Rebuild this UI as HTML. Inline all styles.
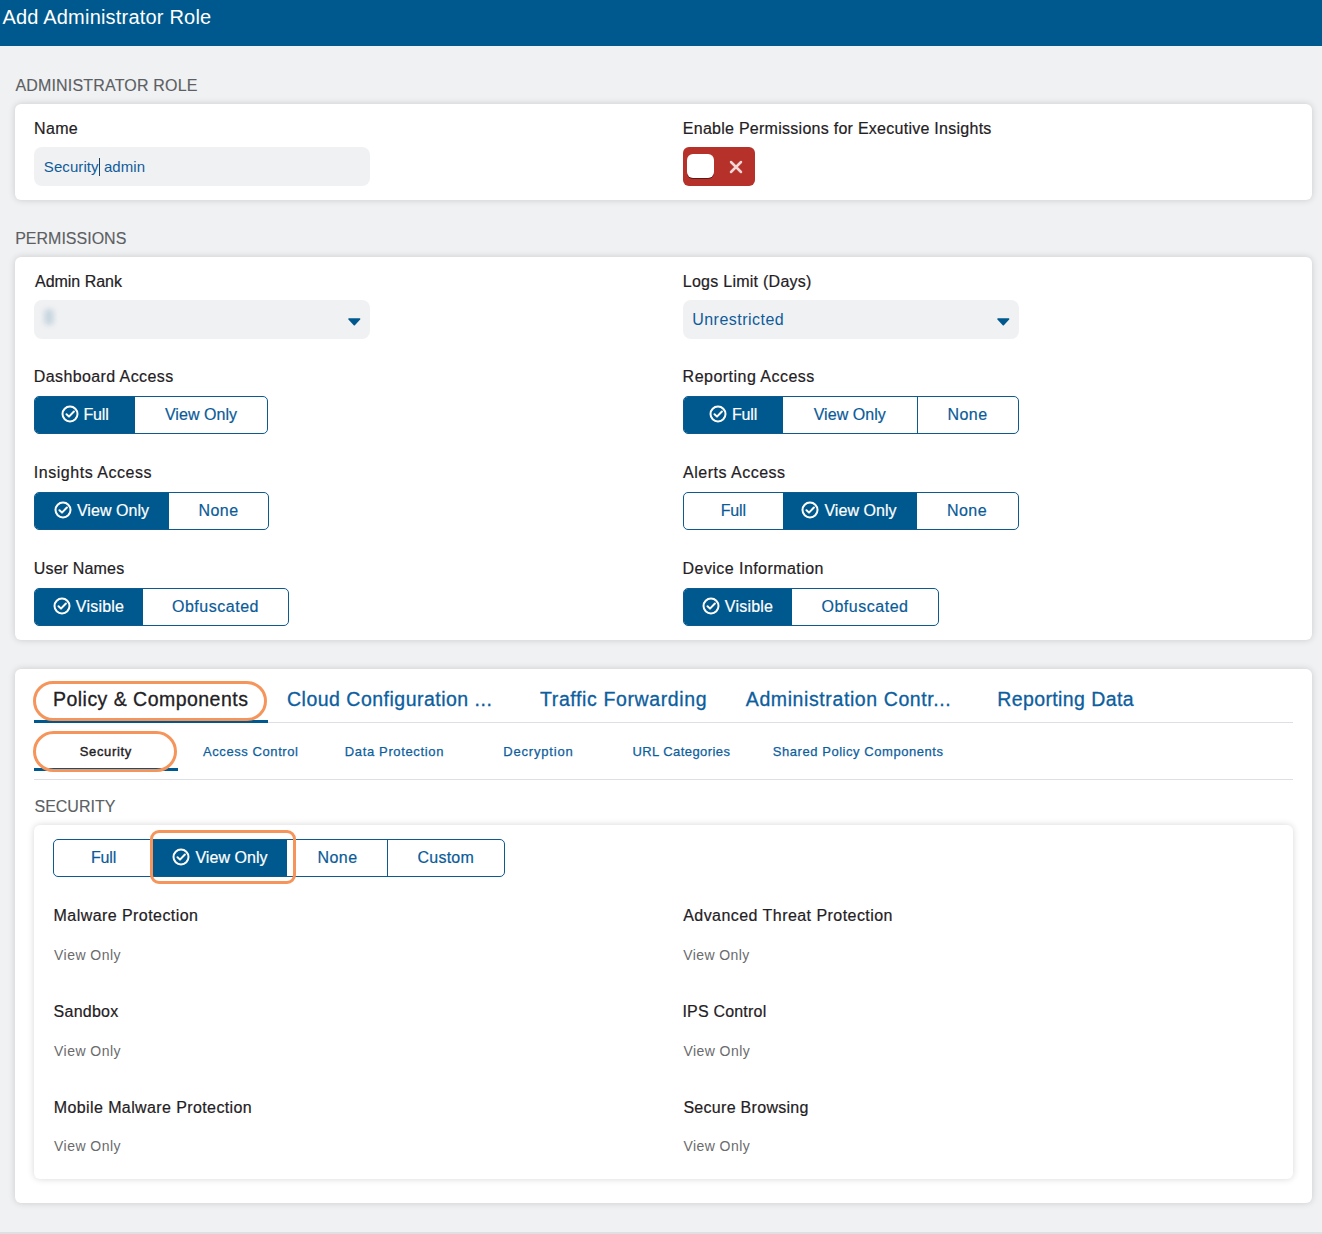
<!DOCTYPE html>
<html><head><meta charset="utf-8"><style>
html,body{margin:0;padding:0;}
body{width:1322px;height:1234px;position:relative;overflow:hidden;background:#f0f1f3;font-family:"Liberation Sans",sans-serif;}
.a{position:absolute;}
.t{position:absolute;white-space:nowrap;line-height:1;}
.card{position:absolute;background:#fff;border-radius:6px;box-shadow:0 0 7px rgba(0,0,0,0.16);}
.inp{position:absolute;background:#f0f1f3;border-radius:8px;}
.grp{position:absolute;height:38px;border:1px solid #0d5a8e;border-radius:5px;box-sizing:border-box;overflow:hidden;display:flex;}
.seg{height:100%;box-sizing:border-box;display:flex;align-items:center;justify-content:center;font-size:16px;color:#0a5b98;flex:none;-webkit-text-stroke:0.2px currentColor;}
.seg.on{background:#00598e;color:#fff;}
.ck{margin-right:5px;margin-left:-1px;position:relative;top:-1px;flex:none;}
.tri{position:absolute;width:0;height:0;border-left:6px solid transparent;border-right:6px solid transparent;border-top:7px solid #00598e;}
</style></head>
<body>
<div class="a" style="left:0;top:0;width:1322px;height:46px;background:#00598e"></div>
<div class="t" id="h_title" style="left:2.4px;top:6.5px;font-size:20px;color:#fff;letter-spacing:0.204px;">Add Administrator Role</div>
<div class="t" id="s_admin" style="left:15.4px;top:78.0px;font-size:16px;color:#5c5f63;letter-spacing:0.179px;-webkit-text-stroke:0.15px #5c5f63;">ADMINISTRATOR ROLE</div>
<div class="card" style="left:15px;top:104px;width:1297px;height:96px"></div>
<div class="t" id="l_name" style="left:34.0px;top:121.0px;font-size:16px;color:#1f2124;letter-spacing:0.36px;-webkit-text-stroke:0.2px #1f2124;">Name</div>
<div class="inp" style="left:34px;top:147px;width:336px;height:39px"></div>
<div class="t" id="inp_text" style="left:43.8px;top:158.0px;font-size:15px;color:#0f5c99;letter-spacing:0.084px;">Security<span style="display:inline-block;width:1px;height:18px;background:#1a3f5f;vertical-align:-4px"></span> admin</div>
<div class="t" id="l_enable" style="left:682.8px;top:121px;font-size:16px;color:#1f2124;letter-spacing:0.266px;-webkit-text-stroke:0.2px #1f2124;">Enable Permissions for Executive Insights</div>
<div class="a" style="left:683px;top:147px;width:72px;height:39px;background:#b5312a;border-radius:6px"></div>
<div class="a" style="left:687px;top:154px;width:27px;height:24px;background:#fff;border-radius:6px;box-shadow:0 1px 0 #5a1a16"></div>
<svg class="a" style="left:728px;top:158.5px" width="16" height="16" viewBox="0 0 16 16"><path d="M3 3L13 13M13 3L3 13" stroke="#f3d6d4" stroke-width="2.5" stroke-linecap="round"/></svg>
<div class="t" id="s_perm" style="left:15.2px;top:231.0px;font-size:16px;color:#5c5f63;letter-spacing:-0.0px;-webkit-text-stroke:0.15px #5c5f63;">PERMISSIONS</div>
<div class="card" style="left:15px;top:257px;width:1297px;height:383px"></div>
<div class="t" id="l_rank" style="left:35.0px;top:274.0px;font-size:16px;color:#1f2124;letter-spacing:-0.02px;-webkit-text-stroke:0.2px #1f2124;">Admin Rank</div>
<div class="inp" style="left:34px;top:300px;width:336px;height:39px"></div>
<div class="a" style="left:44px;top:309px;width:10px;height:16px;background:#c9d7e0;filter:blur(2.5px);border-radius:4px"></div>
<svg class="a" style="left:347.4px;top:317.3px" width="15" height="10" viewBox="0 0 15 10"><path d="M2 2L12.6 2L7.3 7.6Z" fill="#00598e" stroke="#00598e" stroke-width="1.6" stroke-linejoin="round"/></svg>
<div class="t" id="l_logs" style="left:682.8px;top:274.0px;font-size:16px;color:#1f2124;letter-spacing:0.26px;-webkit-text-stroke:0.2px #1f2124;">Logs Limit (Days)</div>
<div class="inp" style="left:683px;top:300px;width:336px;height:39px"></div>
<div class="t" id="v_unres" style="left:692.2px;top:312.0px;font-size:16px;color:#0f5c99;letter-spacing:0.475px;">Unrestricted</div>
<svg class="a" style="left:996px;top:317.3px" width="15" height="10" viewBox="0 0 15 10"><path d="M2 2L12.6 2L7.3 7.6Z" fill="#00598e" stroke="#00598e" stroke-width="1.6" stroke-linejoin="round"/></svg>
<div class="t" id="l_dash" style="left:33.8px;top:369.0px;font-size:16px;color:#1f2124;letter-spacing:0.396px;-webkit-text-stroke:0.2px #1f2124;">Dashboard Access</div>
<div class="t" id="l_rep" style="left:682.6px;top:369.0px;font-size:16px;color:#1f2124;letter-spacing:0.48px;-webkit-text-stroke:0.2px #1f2124;">Reporting Access</div>
<div class="t" id="l_ins" style="left:33.8px;top:465.0px;font-size:16px;color:#1f2124;letter-spacing:0.528px;-webkit-text-stroke:0.2px #1f2124;">Insights Access</div>
<div class="t" id="l_alert" style="left:683.0px;top:465.0px;font-size:16px;color:#1f2124;letter-spacing:0.507px;-webkit-text-stroke:0.2px #1f2124;">Alerts Access</div>
<div class="t" id="l_user" style="left:33.8px;top:561.0px;font-size:16px;color:#1f2124;letter-spacing:0.16px;-webkit-text-stroke:0.2px #1f2124;">User Names</div>
<div class="t" id="l_dev" style="left:682.6px;top:561.0px;font-size:16px;color:#1f2124;letter-spacing:0.436px;-webkit-text-stroke:0.2px #1f2124;">Device Information</div>
<div class="grp" id="g_dash" style="left:34px;top:396px;"><div class="seg on" style="width:100px;"><svg class="ck" width="18" height="18" viewBox="0 0 18 18"><circle cx="9" cy="9" r="7.5" fill="none" stroke="#fff" stroke-width="2.0"/><path d="M5.5 9.2L8 11.6L12.9 6.5" fill="none" stroke="#fff" stroke-width="2.0" stroke-linecap="round" stroke-linejoin="round"/></svg><span id="g_dash_0" style="letter-spacing:-0.198px;position:relative;top:0px">Full</span></div><div class="seg" style="width:132px;"><span id="g_dash_1" style="letter-spacing:0.056px;position:relative;top:0px">View Only</span></div></div>
<div class="grp" id="g_rep" style="left:683px;top:396px;"><div class="seg on" style="width:99px;"><svg class="ck" width="18" height="18" viewBox="0 0 18 18"><circle cx="9" cy="9" r="7.5" fill="none" stroke="#fff" stroke-width="2.0"/><path d="M5.5 9.2L8 11.6L12.9 6.5" fill="none" stroke="#fff" stroke-width="2.0" stroke-linecap="round" stroke-linejoin="round"/></svg><span id="g_rep_0" style="letter-spacing:-0.198px;position:relative;top:0px">Full</span></div><div class="seg" style="width:133.5px;"><span id="g_rep_1" style="letter-spacing:0.056px;position:relative;top:0px">View Only</span></div><div class="seg" style="width:101px;border-left:1px solid #0d5a8e;"><span id="g_rep_2" style="letter-spacing:0.465px;position:relative;top:0px">None</span></div></div>
<div class="grp" id="g_ins" style="left:34px;top:492px;"><div class="seg on" style="width:134px;"><svg class="ck" width="18" height="18" viewBox="0 0 18 18"><circle cx="9" cy="9" r="7.5" fill="none" stroke="#fff" stroke-width="2.0"/><path d="M5.5 9.2L8 11.6L12.9 6.5" fill="none" stroke="#fff" stroke-width="2.0" stroke-linecap="round" stroke-linejoin="round"/></svg><span id="g_ins_0" style="letter-spacing:0.056px;position:relative;top:0px">View Only</span></div><div class="seg" style="width:99px;"><span id="g_ins_1" style="letter-spacing:0.465px;position:relative;top:0px">None</span></div></div>
<div class="grp" id="g_alert" style="left:683px;top:492px;"><div class="seg" style="width:98.5px;"><span id="g_alert_0" style="letter-spacing:-0.198px;position:relative;top:0px">Full</span></div><div class="seg on" style="width:134px;"><svg class="ck" width="18" height="18" viewBox="0 0 18 18"><circle cx="9" cy="9" r="7.5" fill="none" stroke="#fff" stroke-width="2.0"/><path d="M5.5 9.2L8 11.6L12.9 6.5" fill="none" stroke="#fff" stroke-width="2.0" stroke-linecap="round" stroke-linejoin="round"/></svg><span id="g_alert_1" style="letter-spacing:0.056px;position:relative;top:0px">View Only</span></div><div class="seg" style="width:101px;"><span id="g_alert_2" style="letter-spacing:0.465px;position:relative;top:0px">None</span></div></div>
<div class="grp" id="g_user" style="left:34px;top:588px;"><div class="seg on" style="width:108px;"><svg class="ck" width="18" height="18" viewBox="0 0 18 18"><circle cx="9" cy="9" r="7.5" fill="none" stroke="#fff" stroke-width="2.0"/><path d="M5.5 9.2L8 11.6L12.9 6.5" fill="none" stroke="#fff" stroke-width="2.0" stroke-linecap="round" stroke-linejoin="round"/></svg><span id="g_user_0" style="letter-spacing:0.21px;position:relative;top:0px">Visible</span></div><div class="seg" style="width:145px;"><span id="g_user_1" style="letter-spacing:0.52px;position:relative;top:0px">Obfuscated</span></div></div>
<div class="grp" id="g_dev" style="left:683px;top:588px;"><div class="seg on" style="width:108px;"><svg class="ck" width="18" height="18" viewBox="0 0 18 18"><circle cx="9" cy="9" r="7.5" fill="none" stroke="#fff" stroke-width="2.0"/><path d="M5.5 9.2L8 11.6L12.9 6.5" fill="none" stroke="#fff" stroke-width="2.0" stroke-linecap="round" stroke-linejoin="round"/></svg><span id="g_dev_0" style="letter-spacing:0.21px;position:relative;top:0px">Visible</span></div><div class="seg" style="width:146px;"><span id="g_dev_1" style="letter-spacing:0.52px;position:relative;top:0px">Obfuscated</span></div></div>
<div class="card" style="left:15px;top:669px;width:1297px;height:534px"></div>
<div class="a" style="left:34px;top:722px;width:1259px;height:1px;background:#dcdfe3"></div>
<div class="a" style="left:34px;top:720px;width:234px;height:3px;background:#00598e"></div>
<div class="t" id="tab1" style="left:53.0px;top:690px;font-size:19.5px;color:#1f2124;letter-spacing:0.47px;-webkit-text-stroke:0.3px #1f2124;">Policy &amp; Components</div>
<div class="t" id="tab2" style="left:287.0px;top:690px;font-size:19.5px;color:#0d5e9e;letter-spacing:0.491px;-webkit-text-stroke:0.3px #0d5e9e;">Cloud Configuration ...</div>
<div class="t" id="tab3" style="left:540.0px;top:690px;font-size:19.5px;color:#0d5e9e;letter-spacing:0.615px;-webkit-text-stroke:0.3px #0d5e9e;">Traffic Forwarding</div>
<div class="t" id="tab4" style="left:745.8px;top:690px;font-size:19.5px;color:#0d5e9e;letter-spacing:0.598px;-webkit-text-stroke:0.3px #0d5e9e;">Administration Contr...</div>
<div class="t" id="tab5" style="left:997.2px;top:690px;font-size:19.5px;color:#0d5e9e;letter-spacing:0.401px;-webkit-text-stroke:0.3px #0d5e9e;">Reporting Data</div>
<div class="a" style="left:33px;top:681px;width:234px;height:40px;border:3px solid #f5955b;border-radius:20px;box-sizing:border-box"></div>
<div class="a" style="left:34px;top:779px;width:1259px;height:1px;background:#dcdfe3"></div>
<div class="a" style="left:34px;top:768px;width:144px;height:3px;background:#00598e"></div>
<div class="t" id="st1" style="left:79.8px;top:745px;font-size:13px;color:#1f2124;letter-spacing:0.634px;-webkit-text-stroke:0.4px #1f2124;">Security</div>
<div class="t" id="st2" style="left:203.0px;top:745px;font-size:13px;color:#0d5e9e;letter-spacing:0.582px;-webkit-text-stroke:0.25px #0d5e9e;">Access Control</div>
<div class="t" id="st3" style="left:344.8px;top:745px;font-size:13px;color:#0d5e9e;letter-spacing:0.643px;-webkit-text-stroke:0.25px #0d5e9e;">Data Protection</div>
<div class="t" id="st4" style="left:503.2px;top:745px;font-size:13px;color:#0d5e9e;letter-spacing:0.82px;-webkit-text-stroke:0.25px #0d5e9e;">Decryption</div>
<div class="t" id="st5" style="left:632.4px;top:745px;font-size:13px;color:#0d5e9e;letter-spacing:0.43px;-webkit-text-stroke:0.25px #0d5e9e;">URL Categories</div>
<div class="t" id="st6" style="left:772.8px;top:745px;font-size:13px;color:#0d5e9e;letter-spacing:0.548px;-webkit-text-stroke:0.25px #0d5e9e;">Shared Policy Components</div>
<div class="a" style="left:33px;top:731px;width:144px;height:41px;border:3px solid #f5955b;border-radius:21px;box-sizing:border-box"></div>
<div class="t" id="s_sec" style="left:34.5px;top:799.0px;font-size:16px;color:#5c5f63;letter-spacing:-0.013px;-webkit-text-stroke:0.15px #5c5f63;">SECURITY</div>
<div class="card" style="left:34px;top:825px;width:1259px;height:354px"></div>
<div class="grp" id="g_sec" style="left:53px;top:839px;"><div class="seg" style="width:99px;"><span id="g_sec_0" style="letter-spacing:-0.198px;position:relative;top:0px">Full</span></div><div class="seg on" style="width:135px;box-shadow:inset -1px 0 0 #fff;"><svg class="ck" width="18" height="18" viewBox="0 0 18 18"><circle cx="9" cy="9" r="7.5" fill="none" stroke="#fff" stroke-width="2.0"/><path d="M5.5 9.2L8 11.6L12.9 6.5" fill="none" stroke="#fff" stroke-width="2.0" stroke-linecap="round" stroke-linejoin="round"/></svg><span id="g_sec_1" style="letter-spacing:0.056px;position:relative;top:0px">View Only</span></div><div class="seg" style="width:99px;"><span id="g_sec_2" style="letter-spacing:0.465px;position:relative;top:0px">None</span></div><div class="seg" style="width:116.5px;border-left:1px solid #0d5a8e;"><span id="g_sec_3" style="letter-spacing:0.216px;position:relative;top:0px">Custom</span></div></div>
<div class="a" style="left:150px;top:830px;width:146px;height:54px;border:3px solid #f5955b;border-radius:9px;box-sizing:border-box"></div>
<div class="t" id="it1" style="left:53.6px;top:908px;font-size:16px;color:#1f2124;letter-spacing:0.436px;-webkit-text-stroke:0.2px #1f2124;">Malware Protection</div>
<div class="t" id="it1v" style="left:54.0px;top:948px;font-size:14px;color:#6a6b6d;letter-spacing:0.472px;">View Only</div>
<div class="t" id="it2" style="left:683.2px;top:908px;font-size:16px;color:#1f2124;letter-spacing:0.45px;-webkit-text-stroke:0.2px #1f2124;">Advanced Threat Protection</div>
<div class="t" id="it2v" style="left:683.2px;top:948px;font-size:14px;color:#6a6b6d;letter-spacing:0.417px;">View Only</div>
<div class="t" id="it3" style="left:53.6px;top:1004px;font-size:16px;color:#1f2124;letter-spacing:0.24px;-webkit-text-stroke:0.2px #1f2124;">Sandbox</div>
<div class="t" id="it3v" style="left:54.0px;top:1044px;font-size:14px;color:#6a6b6d;letter-spacing:0.472px;">View Only</div>
<div class="t" id="it4" style="left:682.4px;top:1004px;font-size:16px;color:#1f2124;letter-spacing:0.198px;-webkit-text-stroke:0.2px #1f2124;">IPS Control</div>
<div class="t" id="it4v" style="left:683.4px;top:1044px;font-size:14px;color:#6a6b6d;letter-spacing:0.45px;">View Only</div>
<div class="t" id="it5" style="left:53.8px;top:1100px;font-size:16px;color:#1f2124;letter-spacing:0.393px;-webkit-text-stroke:0.2px #1f2124;">Mobile Malware Protection</div>
<div class="t" id="it5v" style="left:54.0px;top:1139px;font-size:14px;color:#6a6b6d;letter-spacing:0.472px;">View Only</div>
<div class="t" id="it6" style="left:683.4px;top:1100px;font-size:16px;color:#1f2124;letter-spacing:0.295px;-webkit-text-stroke:0.2px #1f2124;">Secure Browsing</div>
<div class="t" id="it6v" style="left:683.4px;top:1139px;font-size:14px;color:#6a6b6d;letter-spacing:0.45px;">View Only</div>
<div class="a" style="left:0;top:1232px;width:1322px;height:2px;background:#dfe0e2"></div>
</body></html>
